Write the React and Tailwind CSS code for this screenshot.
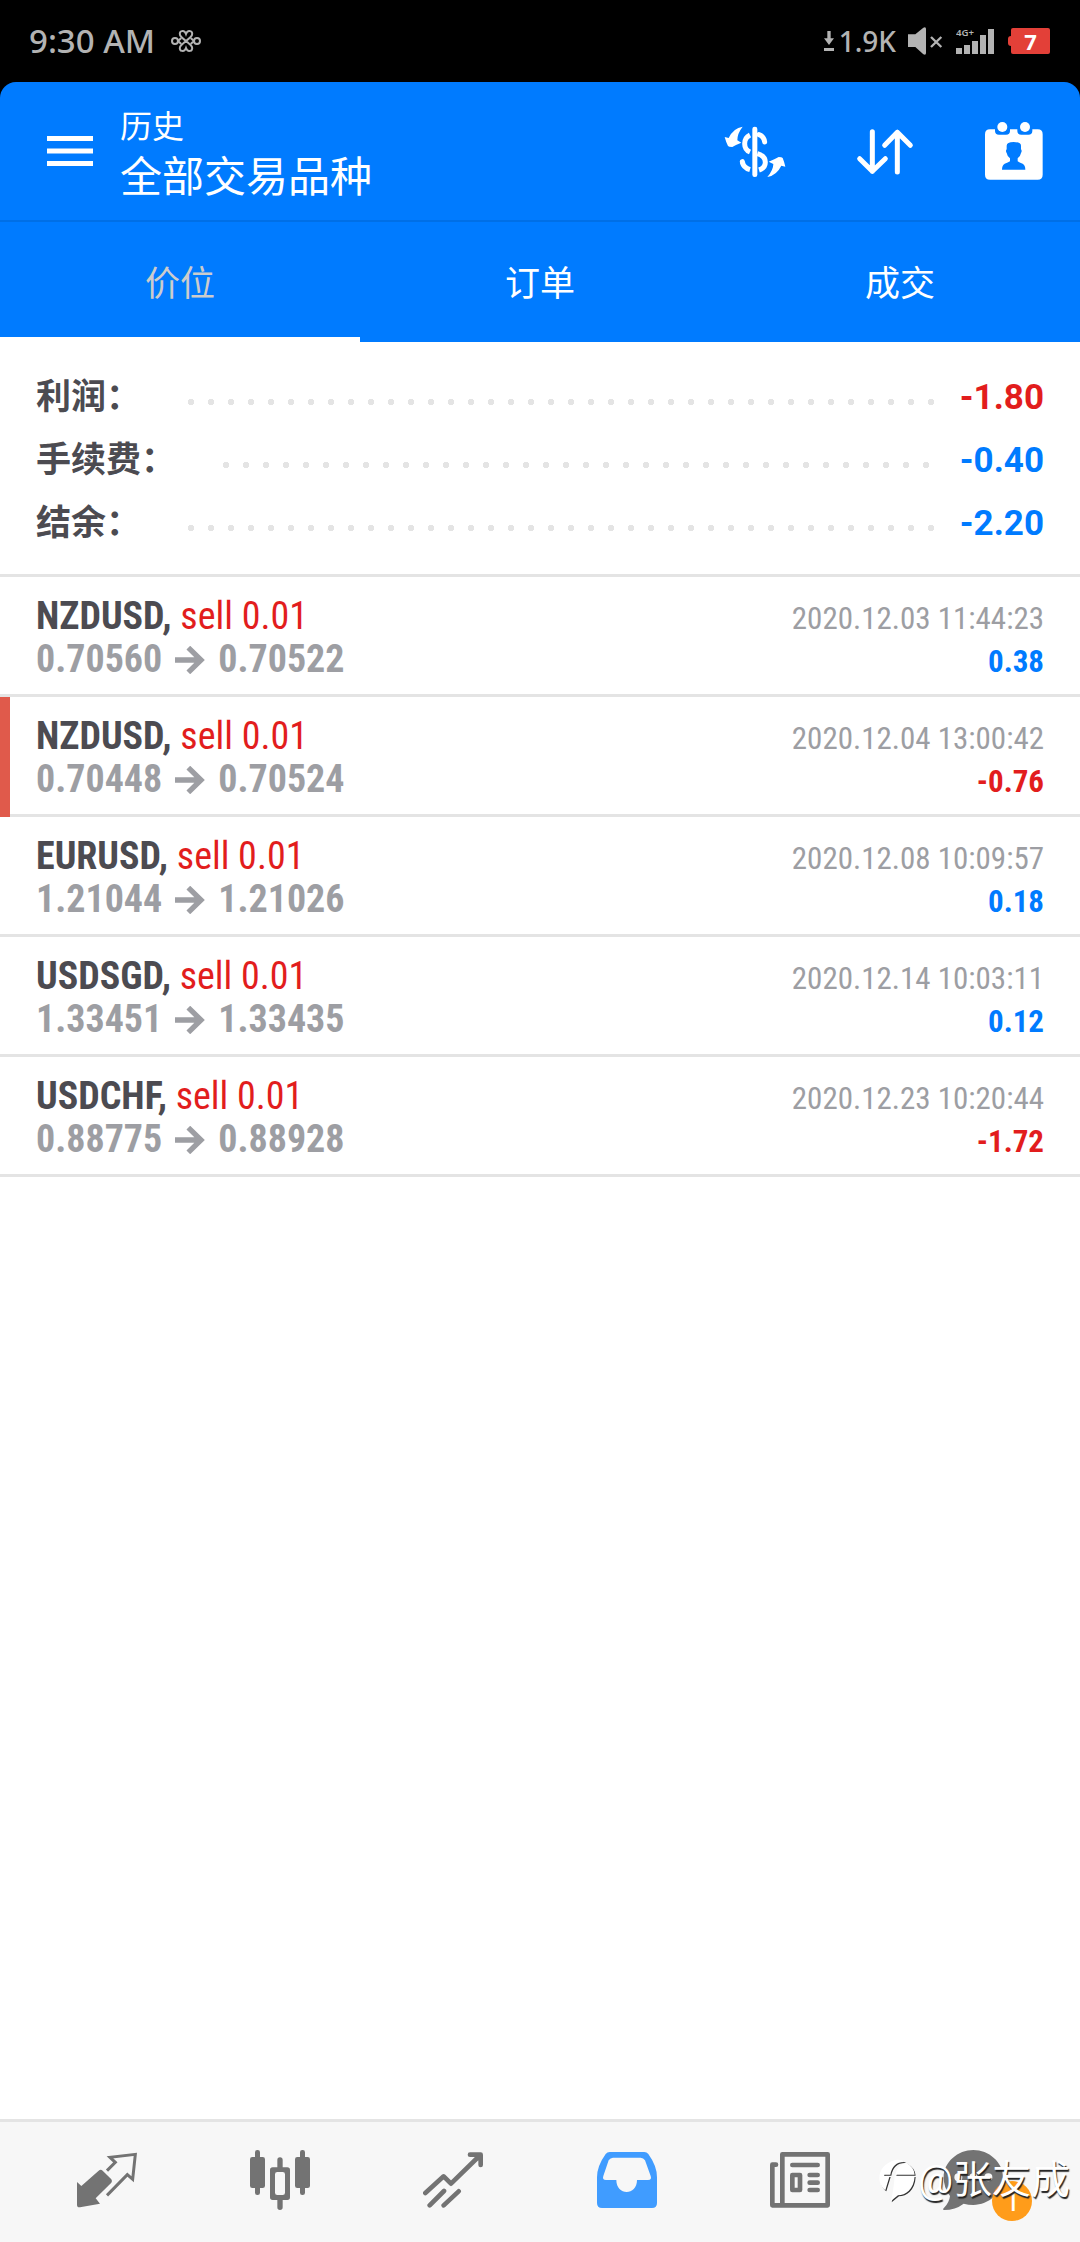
import { useState } from "react";

const RED = "text-[#e21d1d]";
const BLUE = "text-[#007bff]";

const TABS = ["价位", "订单", "成交"];

const RESUMEN = [
  { label: "利润：", val: "-1.80", color: RED },
  { label: "手续费：", val: "-0.40", color: BLUE },
  { label: "结余：", val: "-2.20", color: BLUE },
];

const DEALS = [
  { symbol: "NZDUSD", side: "sell 0.01", open: "0.70560", close: "0.70522", time: "2020.12.03 11:44:23", profit: "0.38" },
  { symbol: "NZDUSD", side: "sell 0.01", open: "0.70448", close: "0.70524", time: "2020.12.04 13:00:42", profit: "-0.76", marked: true },
  { symbol: "EURUSD", side: "sell 0.01", open: "1.21044", close: "1.21026", time: "2020.12.08 10:09:57", profit: "0.18" },
  { symbol: "USDSGD", side: "sell 0.01", open: "1.33451", close: "1.33435", time: "2020.12.14 10:03:11", profit: "0.12" },
  { symbol: "USDCHF", side: "sell 0.01", open: "0.88775", close: "0.88928", time: "2020.12.23 10:20:44", profit: "-1.72" },
];

function StatusBar() {
  return (
    <div className="flex items-center justify-between h-[82px] pl-[29px] pr-[30px] text-[#b3b3b3] font-['Noto_Sans']">
      <div className="flex items-center gap-4">
        <span className="text-[33px] font-medium">9:30 AM</span>
        <svg className="w-[30px] h-6" viewBox="0 0 90 72" fill="none" stroke="currentColor" strokeWidth="6">
          <path d="M45 15C40 1 23 5 27 18C30 28 60 44 63 54C67 67 50 71 45 57C40 71 23 67 27 54C30 44 60 28 63 18C67 5 50 1 45 15Z" />
          <circle cx="12" cy="36" r="9" />
          <circle cx="78" cy="36" r="9" />
          <path d="M21 36L31 27M21 36L31 45M69 36L59 27M69 36L59 45" />
        </svg>
      </div>
      <div className="flex items-center">
        <svg className="w-3 h-5 mr-1" viewBox="0 0 36 60" fill="currentColor">
          <path d="M13 0h10v22h10L18 42L3 22h10zM3 51h30v9H3z" />
        </svg>
        <span className="text-[28px] font-medium mr-3">1.9K</span>
        <svg className="w-[35px] h-7 mr-[13px]" viewBox="0 0 105 84" fill="currentColor">
          <path d="M0 22h22L46 2q8-4 8 4v72q0 8-8 4L22 60H0z" />
          <path d="M69 30L100 60M100 30L69 60" fill="none" stroke="currentColor" strokeWidth="7" />
        </svg>
        <svg className="w-[38px] h-[35px] mr-[14px]" viewBox="0 -15 114 105" fill="currentColor">
          <text x="0" y="22" fontSize="29" fontWeight="600" fontFamily="Noto Sans">4G+</text>
          <path d="M0 57h18v18H0zM24 48h18v27H24zM48 36h18v39H48zM72 18h18v57H72zM96 0h18v75H96z" />
        </svg>
        <div className="flex items-center">
          <div className="w-[3px] h-[10px] rounded-l-sm bg-[#e34038]"></div>
          <div className="w-[39px] h-[26px] rounded-xs bg-[#e34038] text-white text-[22px] leading-[26px] font-bold text-center">7</div>
        </div>
      </div>
    </div>
  );
}

function Header() {
  return (
    <header className="flex items-center h-[140px] pl-[47px] pr-[34px] border-b-2 border-[#006fe6] text-white">
      <button aria-label="菜单" className="mr-[27px]">
        <svg className="w-[46px] h-[30px]" viewBox="0 0 46 30" fill="currentColor">
          <path d="M0 0h46v5H0zM0 12.500h46v5H0zM0 25h46v5H0z" />
        </svg>
      </button>
      <div className="flex-1 pt-2">
        <p className="text-[32px] leading-[46px]">历史</p>
        <h1 className="text-[42px] leading-[56px]">全部交易品种</h1>
      </div>
      <div className="flex gap-[68px]">
        <button aria-label="货币">
          <svg className="w-[62px] h-[60px]" viewBox="132 363 186 180" fill="currentColor">
            <rect x="217" y="380" width="15" height="151" rx="7" />
            <path d="M210 405Q194 413 194 431Q194 449 210 456M187 486Q190 503 210 509M232 461Q256 468 256 487Q256 504 237 510" fill="none" stroke="currentColor" strokeWidth="15" />
            <path d="M237 404Q252 409 254 426M187 485L188 489" fill="none" stroke="currentColor" strokeWidth="15" strokeLinecap="round" />
            <path d="M134 411L146 414Q160 384 188 380Q172 400 172 421L184 428Q168 434 157 441Q146 441 144 438Q138 426 134 411ZM316 500L304 497Q290 526 262 531Q280 510 280 492L266 485Q284 478 296 471Q306 471 308 474Q313 486 316 500Z" />
          </svg>
        </button>
        <button aria-label="排序">
          <svg className="w-[62px] h-[60px]" viewBox="522 363 186 180" fill="none" stroke="currentColor" strokeWidth="15" strokeLinecap="round" strokeLinejoin="round">
            <path d="M577 395V514M539 476L577 514L616 476M652 516V397M614 436L652 397L691 436" />
          </svg>
        </button>
        <button aria-label="日历">
          <svg className="w-[62px] h-[60px]" viewBox="912 363 186 180" fill="currentColor">
            <circle cx="967" cy="381" r="15" />
            <circle cx="1035" cy="381" r="15" />
            <path fillRule="evenodd" d="M930 388H945V393Q945 404 957 404H978Q990 404 990 393V388H1012V393Q1012 404 1024 404H1045Q1057 404 1057 393V388H1073Q1088 388 1088 403V524Q1088 539 1073 539H930Q915 539 915 524V403Q915 388 930 388ZM1001 426Q980 426 980 437V448Q976 452 980 459Q982 470 990 475V484Q984 488 974 491Q966 496 966 509H1036Q1036 496 1028 491Q1018 488 1013 484V475Q1021 470 1023 459Q1027 452 1023 448V437Q1023 426 1001 426Z" />
          </svg>
        </button>
      </div>
    </header>
  );
}

function Tabs() {
  const [active, setActive] = useState(0);

  return (
    <div role="tablist" className="grid grid-cols-3 h-[120px]">
      {TABS.map((t, i) => (
        <button key={t} role="tab" aria-selected={active === i} onClick={() => setActive(i)}
          className={`pt-3 text-[35px] border-b-[5px] ${active === i ? "text-[#cccccc] border-white" : "text-white border-transparent"}`}>
          {t}
        </button>
      ))}
    </div>
  );
}

function Deal({ deal }) {
  return (
    <li className="flex h-[120px] font-['Roboto_Condensed','Roboto',sans-serif]">
      {deal.marked && <div className="w-[10px] bg-[#e05a4b]"></div>}
      <div className={`flex-1 flex justify-between pt-[18px] pr-9 border-b-[3px] border-[#e4e4e4] ${deal.marked ? "pl-[26px]" : "pl-9"}`}>
        <div className="text-[38px] leading-[43px]">
          <p className={RED}><strong className="text-[#4c4b51]">{deal.symbol},</strong> {deal.side}</p>
          <p className="flex items-center font-bold text-[#9d9ea3]">
            {deal.open}
            <svg className="w-[30px] h-7 mx-[13px]" viewBox="0 0 90 84" fill="none" stroke="currentColor" strokeWidth="16">
              <path d="M0 42H78M40 5L78 42L40 79" />
            </svg>
            {deal.close}
          </p>
        </div>
        <div className="pt-0.5 text-right text-[31px] leading-[43px]">
          <p className="text-[#9d9ea3]">{deal.time}</p>
          <p className={`font-bold ${deal.profit.startsWith("-") ? RED : BLUE}`}>{deal.profit}</p>
        </div>
      </div>
    </li>
  );
}

// Bottom navigation icons
const NAV = [
  {
    label: "行情",
    icon: (
      <svg className="w-[60px] h-[60px]" viewBox="231 150 180 180" fill="currentColor">
        <path d="M231 246L244 258L296 212Q302 207 308 212L334 238Q338 243 334 248L287 295L300 311L240 322Q231 323 231 314Z" />
        <path d="M321 212L346 187L330 172L406 163L398 238L382 224L321 286" fill="none" stroke="currentColor" strokeWidth="9" />
      </svg>
    ),
  },
  {
    label: "图表",
    icon: (
      <svg className="w-[60px] h-[60px]" viewBox="750 150 180 180" fill="currentColor">
        <rect x="765" y="150" width="15" height="135" rx="7" />
        <rect x="750" y="171" width="45" height="93" rx="7" />
        <rect x="900" y="150" width="15" height="135" rx="7" />
        <rect x="885" y="171" width="45" height="93" rx="7" />
        <path d="M832 202V180a8 8 0 0 1 16 0V202H862Q870 202 870 210V292Q870 300 862 300H848V322a8 8 0 0 1-16 0V300H818Q810 300 810 292V210Q810 202 818 202ZM832 216Q825 216 825 223V278Q825 285 832 285H848Q855 285 855 278V223Q855 216 848 216Z" fillRule="evenodd" />
      </svg>
    ),
  },
  {
    label: "交易",
    icon: (
      <svg className="w-[60px] h-[60px]" viewBox="189 150 180 180" fill="none" stroke="currentColor" strokeWidth="14" strokeLinecap="round" strokeLinejoin="round">
        <path d="M196 279L251 229L273 251L361 165M330 164H362V195M209 316L252 273M251 316L296 274" />
      </svg>
    ),
  },
  {
    label: "历史",
    active: true,
    icon: (
      <svg className="w-[60px] h-[60px]" viewBox="708 150 180 180" fill="currentColor">
        <path fillRule="evenodd" d="M746 156H850Q857 156 862 162Q888 198 888 232V309Q888 324 873 324H723Q708 324 708 309V232Q708 198 734 162Q739 156 746 156ZM756 173Q748 173 743 181L727 228Q723 240 735 240H766C766 288 828 288 828 240H861Q873 240 869 228L852 181Q847 173 839 173Z" />
      </svg>
    ),
  },
  {
    label: "新闻",
    icon: (
      <svg className="w-[60px] h-[60px]" viewBox="147 150 180 180" fill="none" stroke="currentColor" strokeWidth="14" strokeLinecap="round" strokeLinejoin="round">
        <path d="M184 163H320V316H154V194H165M184 163V312M214 195H290M266 225H290M266 248H290M266 270H290" />
        <path d="M214 225H237V270H214Z" />
      </svg>
    ),
  },
  {
    label: "消息",
    badge: 1,
    icon: (
      <svg className="w-[60px] h-[60px]" viewBox="669 150 180 180" fill="currentColor">
        <path d="M760 150C806 150 849 186 849 232C849 278 806 315 760 315Q745 315 731 311Q706 330 672 330Q667 329 671 325Q688 308 690 288Q671 264 671 232C671 186 714 150 760 150Z" />
        <path d="M715 232h.1M760 232h.1M805 232h.1" stroke="#f7f7f7" strokeWidth="24" strokeLinecap="round" />
      </svg>
    ),
  },
];

function BottomNav() {
  return (
    <nav className="relative grid grid-cols-6 h-[123px] px-5 pb-1 bg-[#f7f7f7] border-t-[3px] border-[#e4e4e4]">
      {NAV.map(n => (
        <button key={n.label} aria-label={n.label}
          className={`flex items-center justify-center ${n.active ? "text-[#409cff]" : "text-[#737373]"}`}>
          <span className="relative">
            {n.icon}
            {n.badge && (
              <span className="absolute left-[49px] top-[31px] size-10 rounded-full bg-[#ff9c1a] text-white text-[30px] leading-10 font-['Roboto']">{n.badge}</span>
            )}
          </span>
        </button>
      ))}
      <div className="absolute right-[10px] bottom-[34px] flex items-center gap-0.5 text-white text-[39px] leading-[56px] [text-shadow:1px_2px_1px_#222]">
        <svg className="w-[38px] h-[45px] drop-shadow-[1px_1px_0_#333]" viewBox="478 186 114 135" fill="currentColor">
          <path d="M500 283C470 262 476 205 530 192Q546 190 560 198Q522 196 515 236H497V240H513Z" />
          <path d="M528 240H588C586 280 560 298 538 298L516 316Q524 290 528 240Z" />
          <path d="M530 236Q536 206 562 200Q586 212 588 236Z" />
        </svg>
        <span>@张友成</span>
      </div>
    </nav>
  );
}

export default function App() {
  return (
    <div className="flex flex-col min-h-screen bg-white font-['Roboto','Noto_Sans_CJK_SC',sans-serif]">
      <div className="bg-black">
        <StatusBar />
        <div className="rounded-t-2xl bg-[#007bff]">
          <Header />
          <Tabs />
        </div>
      </div>

      {/* Totals */}
      <dl className="pt-6 pb-[19px] px-9 border-b-[3px] border-[#e4e4e4] text-[35px] leading-[63px] font-bold">
        {RESUMEN.map(r => (
          <div key={r.label} className="flex items-center">
            <dt className="text-[#4c4b51]">{r.label}</dt>
            <dd className="flex-1 h-[6px] mt-2 ml-10 mr-5 bg-[radial-gradient(circle,#e4e4e4_3px,transparent_3px)] bg-[length:20px_6px]"></dd>
            <dd className={r.color}>{r.val}</dd>
          </div>
        ))}
      </dl>

      <ul className="flex-1">
        {DEALS.map(d => <Deal key={d.time} deal={d} />)}
      </ul>

      <BottomNav />
    </div>
  );
}
